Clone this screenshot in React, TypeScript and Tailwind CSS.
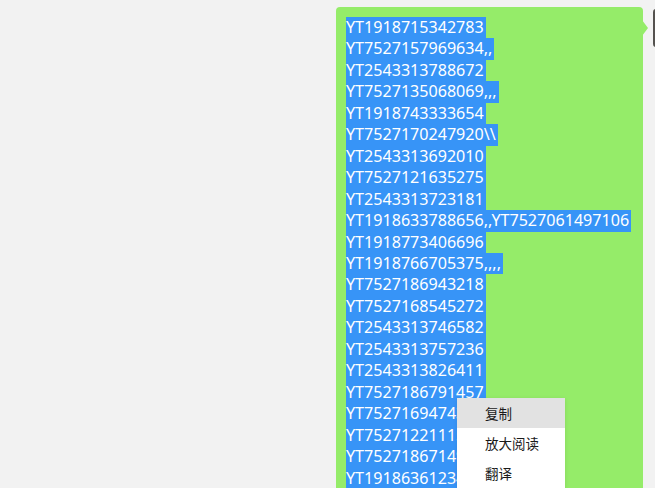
const lines = [
  'YT1918715342783',
  'YT7527157969634,,',
  'YT2543313788672',
  'YT7527135068069,,,',
  'YT1918743333654',
  'YT7527170247920\\\\',
  'YT2543313692010',
  'YT7527121635275',
  'YT2543313723181',
  'YT1918633788656,,YT7527061497106',
  'YT1918773406696',
  'YT1918766705375,,,,',
  'YT7527186943218',
  'YT7527168545272',
  'YT2543313746582',
  'YT2543313757236',
  'YT2543313826411',
  'YT7527186791457',
  'YT7527169474326',
  'YT7527122111583',
  'YT7527186714902',
  'YT1918636123457',
];

const menu = ['复制', '放大阅读', '翻译'];

export default function App() {
  return (
    <div className="relative w-[655px] h-[488px] overflow-hidden bg-[#f2f2f2] font-['Noto_Sans','Noto_Sans_CJK_SC',sans-serif]">
      <div className="flex items-start pl-[336px] pt-[7px]">
        {/* message bubble */}
        <div className="relative w-[307px] shrink-0 rounded-[4px] bg-[#95ec69] pl-[10px] pt-[10px] pb-[12px]">
          <div className="text-[16.1px] leading-[21.45px] text-white">
            {lines.map((line, i) => (
              <div key={i}>
                <span className="inline-block bg-[#3794f7] pr-[2px] whitespace-pre">{line}</span>
              </div>
            ))}
          </div>
          <div className="absolute top-[13px] right-[-5px] h-0 w-0 border-y-[8px] border-l-[6px] border-y-transparent border-l-[#95ec69]" />
        </div>
        {/* avatar */}
        <div className="ml-[10px] mt-[2px] h-[38px] w-[36px] shrink-0 rounded-[3px] bg-[#55524f]" />
      </div>

      {/* context menu */}
      <div className="absolute left-[457px] top-[398px] w-[108px] bg-white shadow-[0_1px_4px_rgba(0,0,0,0.1)]">
        {menu.map((item, i) => (
          <div
            key={item}
            className={`flex h-[30px] items-center pl-[28px] pt-[3px] text-[13.5px] text-[#1a1a1a] ${i === 0 ? 'bg-[#e2e2e2]' : ''}`}
          >
            {item}
          </div>
        ))}
      </div>
    </div>
  );
}
